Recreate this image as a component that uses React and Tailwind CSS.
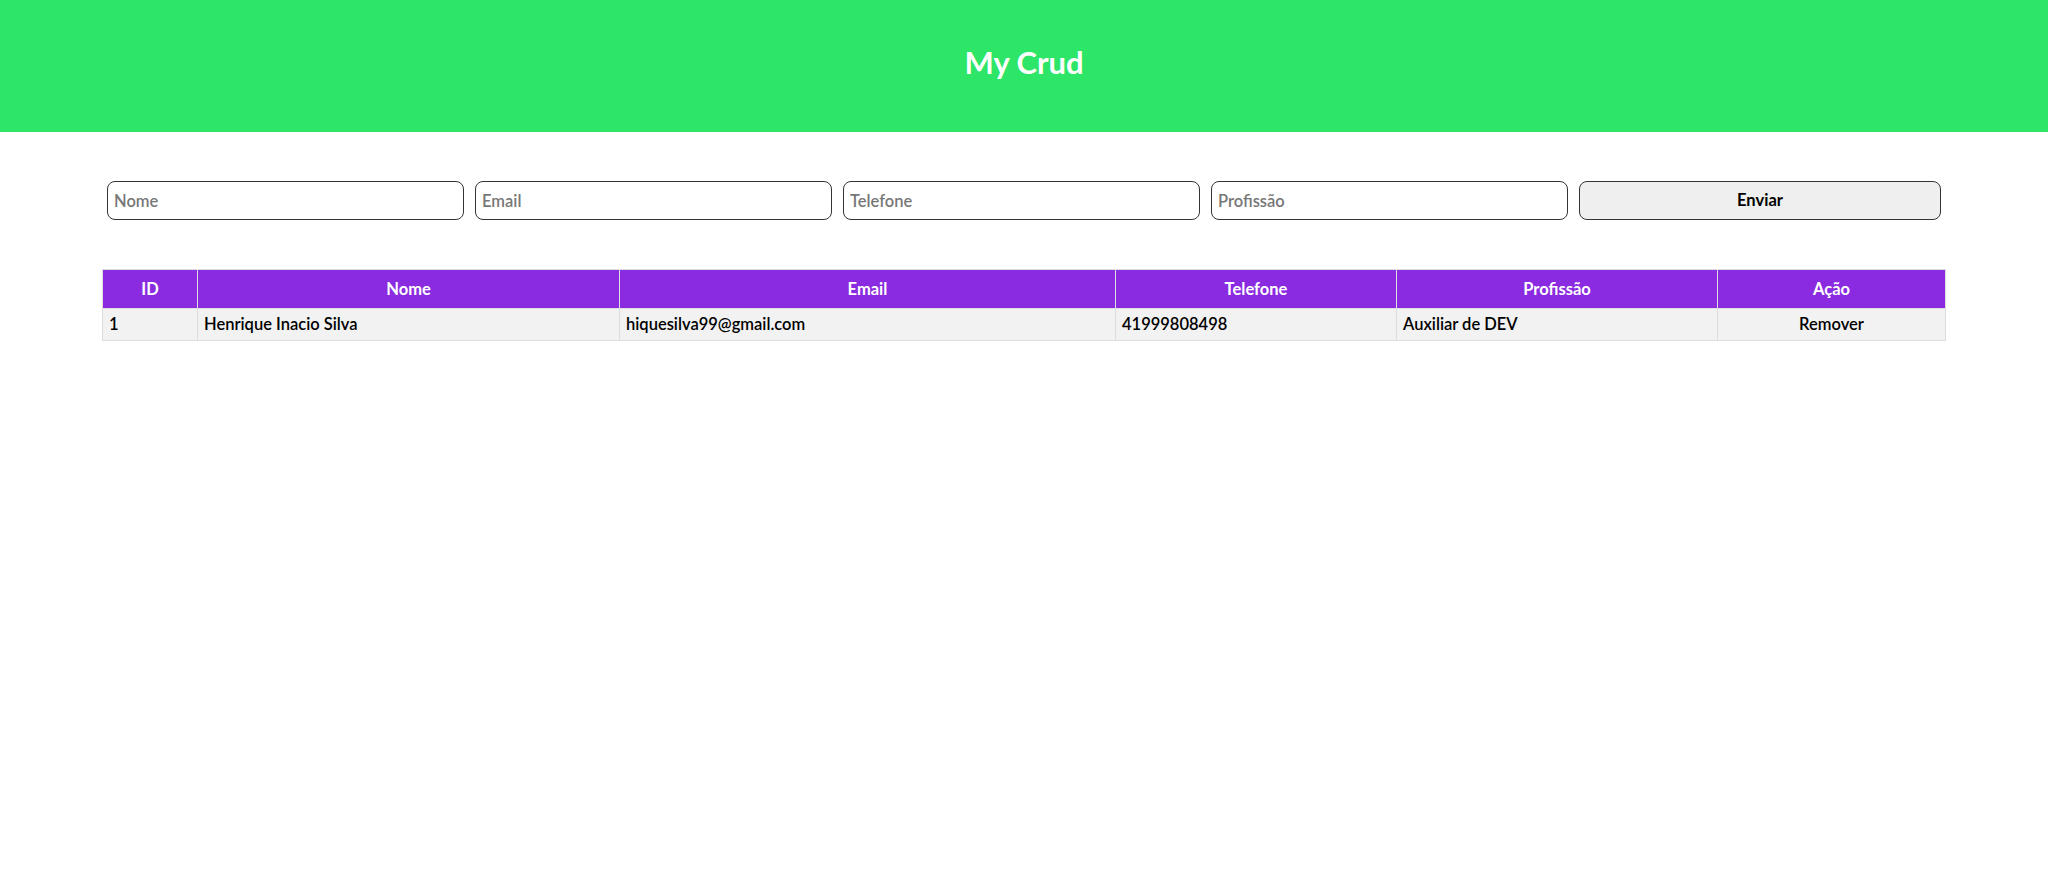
const users = [
  {
    id: 1,
    nome: "Henrique Inacio Silva",
    email: "hiquesilva99@gmail.com",
    telefone: "41999808498",
    profissao: "Auxiliar de DEV",
  },
];

const fields = ["Nome", "Email", "Telefone", "Profissão"];

export default function App() {
  return (
    <div className="min-h-screen bg-white font-['Lato','Open_Sans',sans-serif]">
      {/* Header */}
      <header className="h-[132px] pb-[8px] bg-[#2de567] flex items-center justify-center">
        <h1 className="text-[31px] font-bold text-white leading-none">My Crud</h1>
      </header>

      <main className="px-[102px]">
        {/* Form */}
        <form className="flex gap-[11px] px-[5px] pt-[49px]" onSubmit={(e) => e.preventDefault()}>
          {fields.map((f) => (
            <input
              key={f}
              type="text"
              placeholder={f}
              className="w-[357px] shrink-0 h-[39px] border border-[#333] rounded-lg px-[6px] text-[16.5px] font-semibold placeholder:text-[#777] outline-none"
            />
          ))}
          <button
            type="submit"
            className="w-[362px] shrink-0 h-[39px] border border-[#333] rounded-lg bg-[#efefef] text-[16.5px] font-bold text-black"
          >
            Enviar
          </button>
        </form>

        {/* Table */}
        <table className="w-full mt-[49px] border-collapse text-[16.5px] font-semibold">
          <thead>
            <tr className="bg-[#8a2be2] text-white h-[39px]">
              <th className="w-[95px] border border-[#ddd] font-bold">ID</th>
              <th className="w-[422px] border border-[#ddd] font-bold">Nome</th>
              <th className="w-[496px] border border-[#ddd] font-bold">Email</th>
              <th className="w-[281px] border border-[#ddd] font-bold">Telefone</th>
              <th className="w-[321px] border border-[#ddd] font-bold">Profissão</th>
              <th className="border border-[#ddd] font-bold">Ação</th>
            </tr>
          </thead>
          <tbody>
            {users.map((u) => (
              <tr key={u.id} className="bg-[#f2f2f2] h-[32px] text-black">
                <td className="border border-[#ddd] px-[6px]">{u.id}</td>
                <td className="border border-[#ddd] px-[6px]">{u.nome}</td>
                <td className="border border-[#ddd] px-[6px]">{u.email}</td>
                <td className="border border-[#ddd] px-[6px]">{u.telefone}</td>
                <td className="border border-[#ddd] px-[6px]">{u.profissao}</td>
                <td className="border border-[#ddd] px-[6px] text-center cursor-pointer">Remover</td>
              </tr>
            ))}
          </tbody>
        </table>
      </main>
    </div>
  );
}
